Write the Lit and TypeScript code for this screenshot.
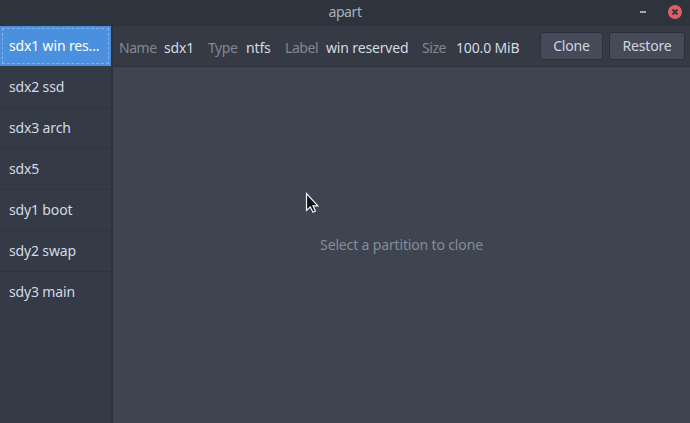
import { LitElement, html, css } from "lit";
import { customElement, state } from "lit/decorators.js";
import { classMap } from "lit/directives/class-map.js";

const partitions = [
  "sdx1 win res...",
  "sdx2 ssd",
  "sdx3 arch",
  "sdx5",
  "sdy1 boot",
  "sdy2 swap",
  "sdy3 main",
];

const details = [
  { key: "Name", value: "sdx1" },
  { key: "Type", value: "ntfs" },
  { key: "Label", value: "win reserved" },
  { key: "Size", value: "100.0 MiB" },
];

@customElement("app-root")
export class AppRoot extends LitElement {
  @state() private selected = 0;

  static styles = css`
    :host {
      display: flex;
      flex-direction: column;
      position: relative;
      width: 100%;
      height: 100vh;
      overflow: hidden;
      background: #3e4450;
      color: #d3dae3;
      font: 14px/20px "Noto Sans", "Open Sans", sans-serif;
      letter-spacing: -0.15px;
    }
    * { box-sizing: border-box; }
    .titlebar {
      flex: none;
      height: 26px;
      display: grid;
      grid-template-columns: 1fr auto 1fr;
      align-items: center;
      background: #2e343e;
      color: #a9b0bc;
    }
    .title { grid-column: 2; padding-bottom: 2px; letter-spacing: -0.4px; }
    .controls {
      display: flex;
      justify-content: flex-end;
      align-items: center;
      gap: 22px;
      padding-right: 8px;
      height: 24px;
      margin-bottom: 2px;
    }
    .minimize { width: 6px; height: 2px; background: #a3a8b1; }
    .close { width: 14px; height: 14px; display: block; }
    .body { flex: 1; min-height: 0; display: flex; }
    .sidebar {
      flex: none;
      width: 113px;
      background: #353b46;
      border-right: 2px solid #2c323d;
    }
    .row {
      height: 41px;
      padding: 0 9px;
      line-height: 39px;
      border-bottom: 1px solid #2f3540;
      white-space: nowrap;
    }
    .row:last-child { border-bottom: 0; }
    .row.active {
      background: #4b90df;
      color: #fff;
      outline: 1px dashed #85b1ea;
      outline-offset: -3px;
      height: 40px;
      margin-bottom: 1px;
      border: 0;
    }
    .main { flex: 1; min-width: 0; display: flex; flex-direction: column; }
    .toolbar {
      flex: none;
      height: 41px;
      display: flex;
      align-items: center;
      background: #353a45;
      border-bottom: 1px solid #2a303b;
      padding: 0 5px 0 6px;
    }
    .details {
      flex: 1;
      display: grid;
      grid-template-columns: 45px 44px 38px 39px 41px 96px 34px auto;
      padding-top: 4px;
      white-space: nowrap;
    }
    .key { color: #828893; letter-spacing: -0.45px; }
    .buttons { display: flex; gap: 6px; padding-bottom: 1px; }
    .button {
      height: 28px;
      width: 63px;
      padding: 0;
      border: 1px solid #2b303c;
      border-radius: 3px;
      background: #444a58;
      color: #d0d6e0;
      font: inherit;
      letter-spacing: inherit;
      line-height: 25px;
    }
    .button.wide { width: 76px; }
    .empty {
      flex: 1;
      display: flex;
      align-items: center;
      justify-content: center;
      color: #858c99;
    }
    .cursor { position: absolute; left: 305px; top: 192px; width: 15px; height: 22px; }
  `;

  render() {
    return html`
      <div class="titlebar">
        <span class="title">apart</span>
        <div class="controls">
          <span class="minimize"></span>
          <svg class="close" viewBox="0 0 14 14">
            <circle cx="7" cy="7" r="7" fill="#dc6065" />
            <path d="M4.5 4.5 9.5 9.5M9.5 4.5 4.5 9.5" stroke="#3b333d" stroke-width="2" />
          </svg>
        </div>
      </div>
      <div class="body">
        <div class="sidebar">
          ${partitions.map(
            (name, i) => html`<div
              class=${classMap({ row: true, active: i === this.selected })}
              @click=${() => (this.selected = i)}
            >${name}</div>`
          )}
        </div>
        <div class="main">
          <div class="toolbar">
            <div class="details">
              ${details.map(
                (d) => html`<span class="key">${d.key}</span><span>${d.value}</span>`
              )}
            </div>
            <div class="buttons">
              <button class="button">Clone</button>
              <button class="button wide">Restore</button>
            </div>
          </div>
          <div class="empty">Select a partition to clone</div>
        </div>
      </div>
      <svg class="cursor" viewBox="0 0 15 22">
        <path
          d="M1.5 1.5V18.5L5.3 15 8 20.2 10.4 19 8 13.8H12.8Z"
          fill="#111318" stroke="#f2f3f5" stroke-width="1.2" stroke-linejoin="miter"
        />
      </svg>
    `;
  }
}
